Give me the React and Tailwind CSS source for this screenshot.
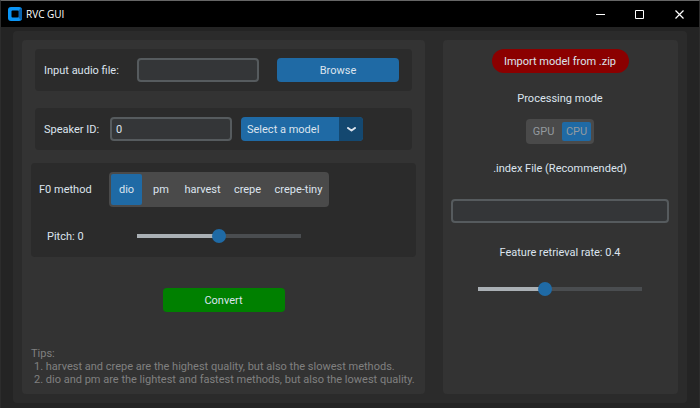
import { useId, useState } from "react";

const METHODS = ["dio", "pm", "harvest", "crepe", "crepe-tiny"];
const METHOD_WIDTHS = {
  dio: "w-[31px]",
  pm: "w-[38px]",
  harvest: "w-[45px]",
  crepe: "w-[45px]",
  "crepe-tiny": "w-[57px]",
};

const inputClass =
  "h-6 rounded-[4px] border-2 border-[#565b5e] bg-[#343638] px-1 text-[#dce4ee] outline-none";

// Slider with the part before the thumb filled in
const Slider = ({ label, min, max, step, value, onChange }) => {
  const ratio = (value - min) / (max - min);

  return (
    <input
      type="range"
      aria-label={label}
      min={min}
      max={max}
      step={step}
      value={value}
      onChange={(e) => onChange(Number(e.target.value))}
      style={{ "--fill": `${ratio * 100}%` }}
      className="block h-[14px] w-[164px] cursor-pointer appearance-none bg-transparent [&::-webkit-slider-runnable-track]:h-1 [&::-webkit-slider-runnable-track]:bg-[linear-gradient(to_right,#aab0b5_var(--fill),#4a4d50_var(--fill))] [&::-webkit-slider-thumb]:-mt-[5px] [&::-webkit-slider-thumb]:size-[14px] [&::-webkit-slider-thumb]:appearance-none [&::-webkit-slider-thumb]:rounded-full [&::-webkit-slider-thumb]:bg-[#1f6aa5]"
    />
  );
};

const TitleBar = () => (
  <header className="flex h-[26px] items-center bg-black text-white">
    <svg className="ml-[7px] size-[14px]" viewBox="0 0 14 14">
      <rect width="14" height="14" rx="3" fill="#0a94f5" />
      <path d="M10 4l3-3q1 .8 1 2v8q0 1.200-1 2l-3-3z" fill="#0a62ad" />
      <rect x="3.500" y="3.500" width="7" height="7" rx="1" fill="#000" />
    </svg>
    <h1 className="ml-1 flex-1 font-['Open_Sans',sans-serif] text-[10px]">RVC GUI</h1>
    <button aria-label="Minimize" className="flex h-full w-10 items-center justify-center">
      <svg width="9" height="9" viewBox="0 0 9 9">
        <path d="M0 4.500h9" stroke="#fff" />
      </svg>
    </button>
    <button aria-label="Maximize" className="flex h-full w-[39px] items-center justify-center">
      <svg width="9" height="9" viewBox="0 0 9 9" fill="none">
        <path d="M.5.5h8v8h-8z" stroke="#fff" />
      </svg>
    </button>
    <button aria-label="Close" className="flex h-full w-10 items-center justify-center">
      <svg width="9" height="9" viewBox="0 0 9 9">
        <path d="M.5.5l8 8M8.500.5l-8 8" stroke="#fff" strokeWidth="1.200" />
      </svg>
    </button>
  </header>
);

const App = () => {
  const id = useId();
  const [audioFile, setAudioFile] = useState("");
  const [speaker, setSpeaker] = useState("0");
  const [method, setMethod] = useState("dio");
  const [pitch, setPitch] = useState(0);
  const [indexFile, setIndexFile] = useState("");
  const [rate, setRate] = useState(0.4);

  return (
    <div className="flex min-h-screen flex-col border-x border-t border-x-[#2c2c2c] border-t-[#666] bg-[#242424] font-[Roboto,sans-serif] text-[11px] leading-[13px] text-[#dce4ee]">
      <TitleBar />
      <main className="mx-3 mt-1 mb-[5px] grid flex-1 grid-cols-[403fr_235fr] gap-[18px] rounded-[4px] bg-[#2b2b2b] p-[9px]">
        {/* Conversion settings */}
        <section className="flex flex-col rounded-[4px] bg-[#333333] px-[9px] pt-[9px] pb-2">
          <div className="mx-1 flex h-[42px] items-center rounded-[4px] bg-[#2b2b2b] px-[9px]">
            <label htmlFor={`${id}-audio`} className="w-[93px]">
              Input audio file:
            </label>
            <input
              id={`${id}-audio`}
              value={audioFile}
              onChange={(e) => setAudioFile(e.target.value)}
              className={`${inputClass} w-[122px]`}
            />
            <button className="ml-[18px] h-6 w-[122px] rounded-[4px] bg-[#1f6aa5]">Browse</button>
          </div>

          <div className="mx-1 mt-[17px] flex h-[42px] items-center rounded-[4px] bg-[#2b2b2b] px-[9px]">
            <label htmlFor={`${id}-speaker`} className="w-[66px]">
              Speaker ID:
            </label>
            <input
              id={`${id}-speaker`}
              value={speaker}
              onChange={(e) => setSpeaker(e.target.value)}
              className={`${inputClass} w-[122px]`}
            />
            <div className="relative ml-[9px] h-6 w-[122px] overflow-hidden rounded-[4px] bg-[#1f6aa5]">
              <select aria-label="Model" className="h-6 w-full appearance-none pl-[6px] outline-none">
                <option>Select a model</option>
              </select>
              <span className="pointer-events-none absolute inset-y-0 right-0 flex w-6 items-center justify-center bg-[#144870]">
                <svg width="9" height="5" viewBox="0 0 9 5" fill="none">
                  <path d="M1 1l3.500 2.500L8 1" stroke="#dce4ee" strokeWidth="2" strokeLinecap="round" strokeLinejoin="round" />
                </svg>
              </span>
            </div>
          </div>

          <div className="mt-[13px] h-[94px] rounded-[4px] bg-[#2b2b2b] px-2 pt-[9px]">
            <div role="radiogroup" aria-labelledby={`${id}-method`} className="flex items-center">
              <span id={`${id}-method`} className="w-[70px]">
                F0 method
              </span>
              <div className="flex h-[35px] w-[220px] justify-between rounded-[4px] bg-[#4a4a4a] px-[2px] py-[2px]">
                {METHODS.map((name) => (
                  <label
                    key={name}
                    className={`relative flex cursor-pointer items-center justify-center rounded-[2px] whitespace-nowrap has-checked:bg-[#1f6aa5] ${METHOD_WIDTHS[name]}`}
                  >
                    <input
                      type="radio"
                      name="f0-method"
                      checked={method === name}
                      onChange={() => setMethod(name)}
                      className="sr-only"
                    />
                    {name}
                  </label>
                ))}
              </div>
            </div>
            <div className="mt-[22px] flex items-center pl-2">
              <span className="w-[90px]">Pitch: {pitch}</span>
              <Slider label="Pitch" min={-20} max={20} step={1} value={pitch} onChange={setPitch} />
            </div>
          </div>

          <button className="mt-[31px] h-6 w-[122px] self-center rounded-[4px] bg-[#008000]">
            Convert
          </button>

          <div className="mt-auto text-[#808080]">
            <p>Tips:</p>
            <ol className="pl-[3px] whitespace-nowrap">
              <li>1. harvest and crepe are the highest quality, but also the slowest methods.</li>
              <li>2. dio and pm are the lightest and fastest methods, but also the lowest quality.</li>
            </ol>
          </div>
        </section>

        {/* Model settings */}
        <section className="flex flex-col items-center rounded-[4px] bg-[#333333] pt-[9px] pr-[9px] pl-2">
          <button className="h-6 w-[137px] rounded-full bg-[#8b0000]">Import model from .zip</button>

          <h2 className="mt-[19px]">Processing mode</h2>
          <div className="mt-[14px] flex h-[25px] w-[68px] justify-between rounded-[4px] bg-[#4a4a4a] p-[3px] text-[#949a9f]">
            {["GPU", "CPU"].map((mode) => (
              <label
                key={mode}
                className="relative flex w-[29px] items-center justify-center rounded-[2px] has-checked:bg-[#1f6aa5]"
              >
                <input
                  type="radio"
                  name="processing-mode"
                  defaultChecked={mode === "CPU"}
                  disabled
                  className="sr-only"
                />
                {mode}
              </label>
            ))}
          </div>

          <label htmlFor={`${id}-index`} className="mt-[18px]">
            .index File (Recommended)
          </label>
          <input
            id={`${id}-index`}
            value={indexFile}
            onChange={(e) => setIndexFile(e.target.value)}
            className={`${inputClass} mt-6 w-full`}
          />

          <span className="mt-[23px] mb-[23px]">Feature retrieval rate: {rate}</span>
          <Slider label="Feature retrieval rate" min={0} max={1} step={0.05} value={rate} onChange={setRate} />
        </section>
      </main>
    </div>
  );
};

export default App;
